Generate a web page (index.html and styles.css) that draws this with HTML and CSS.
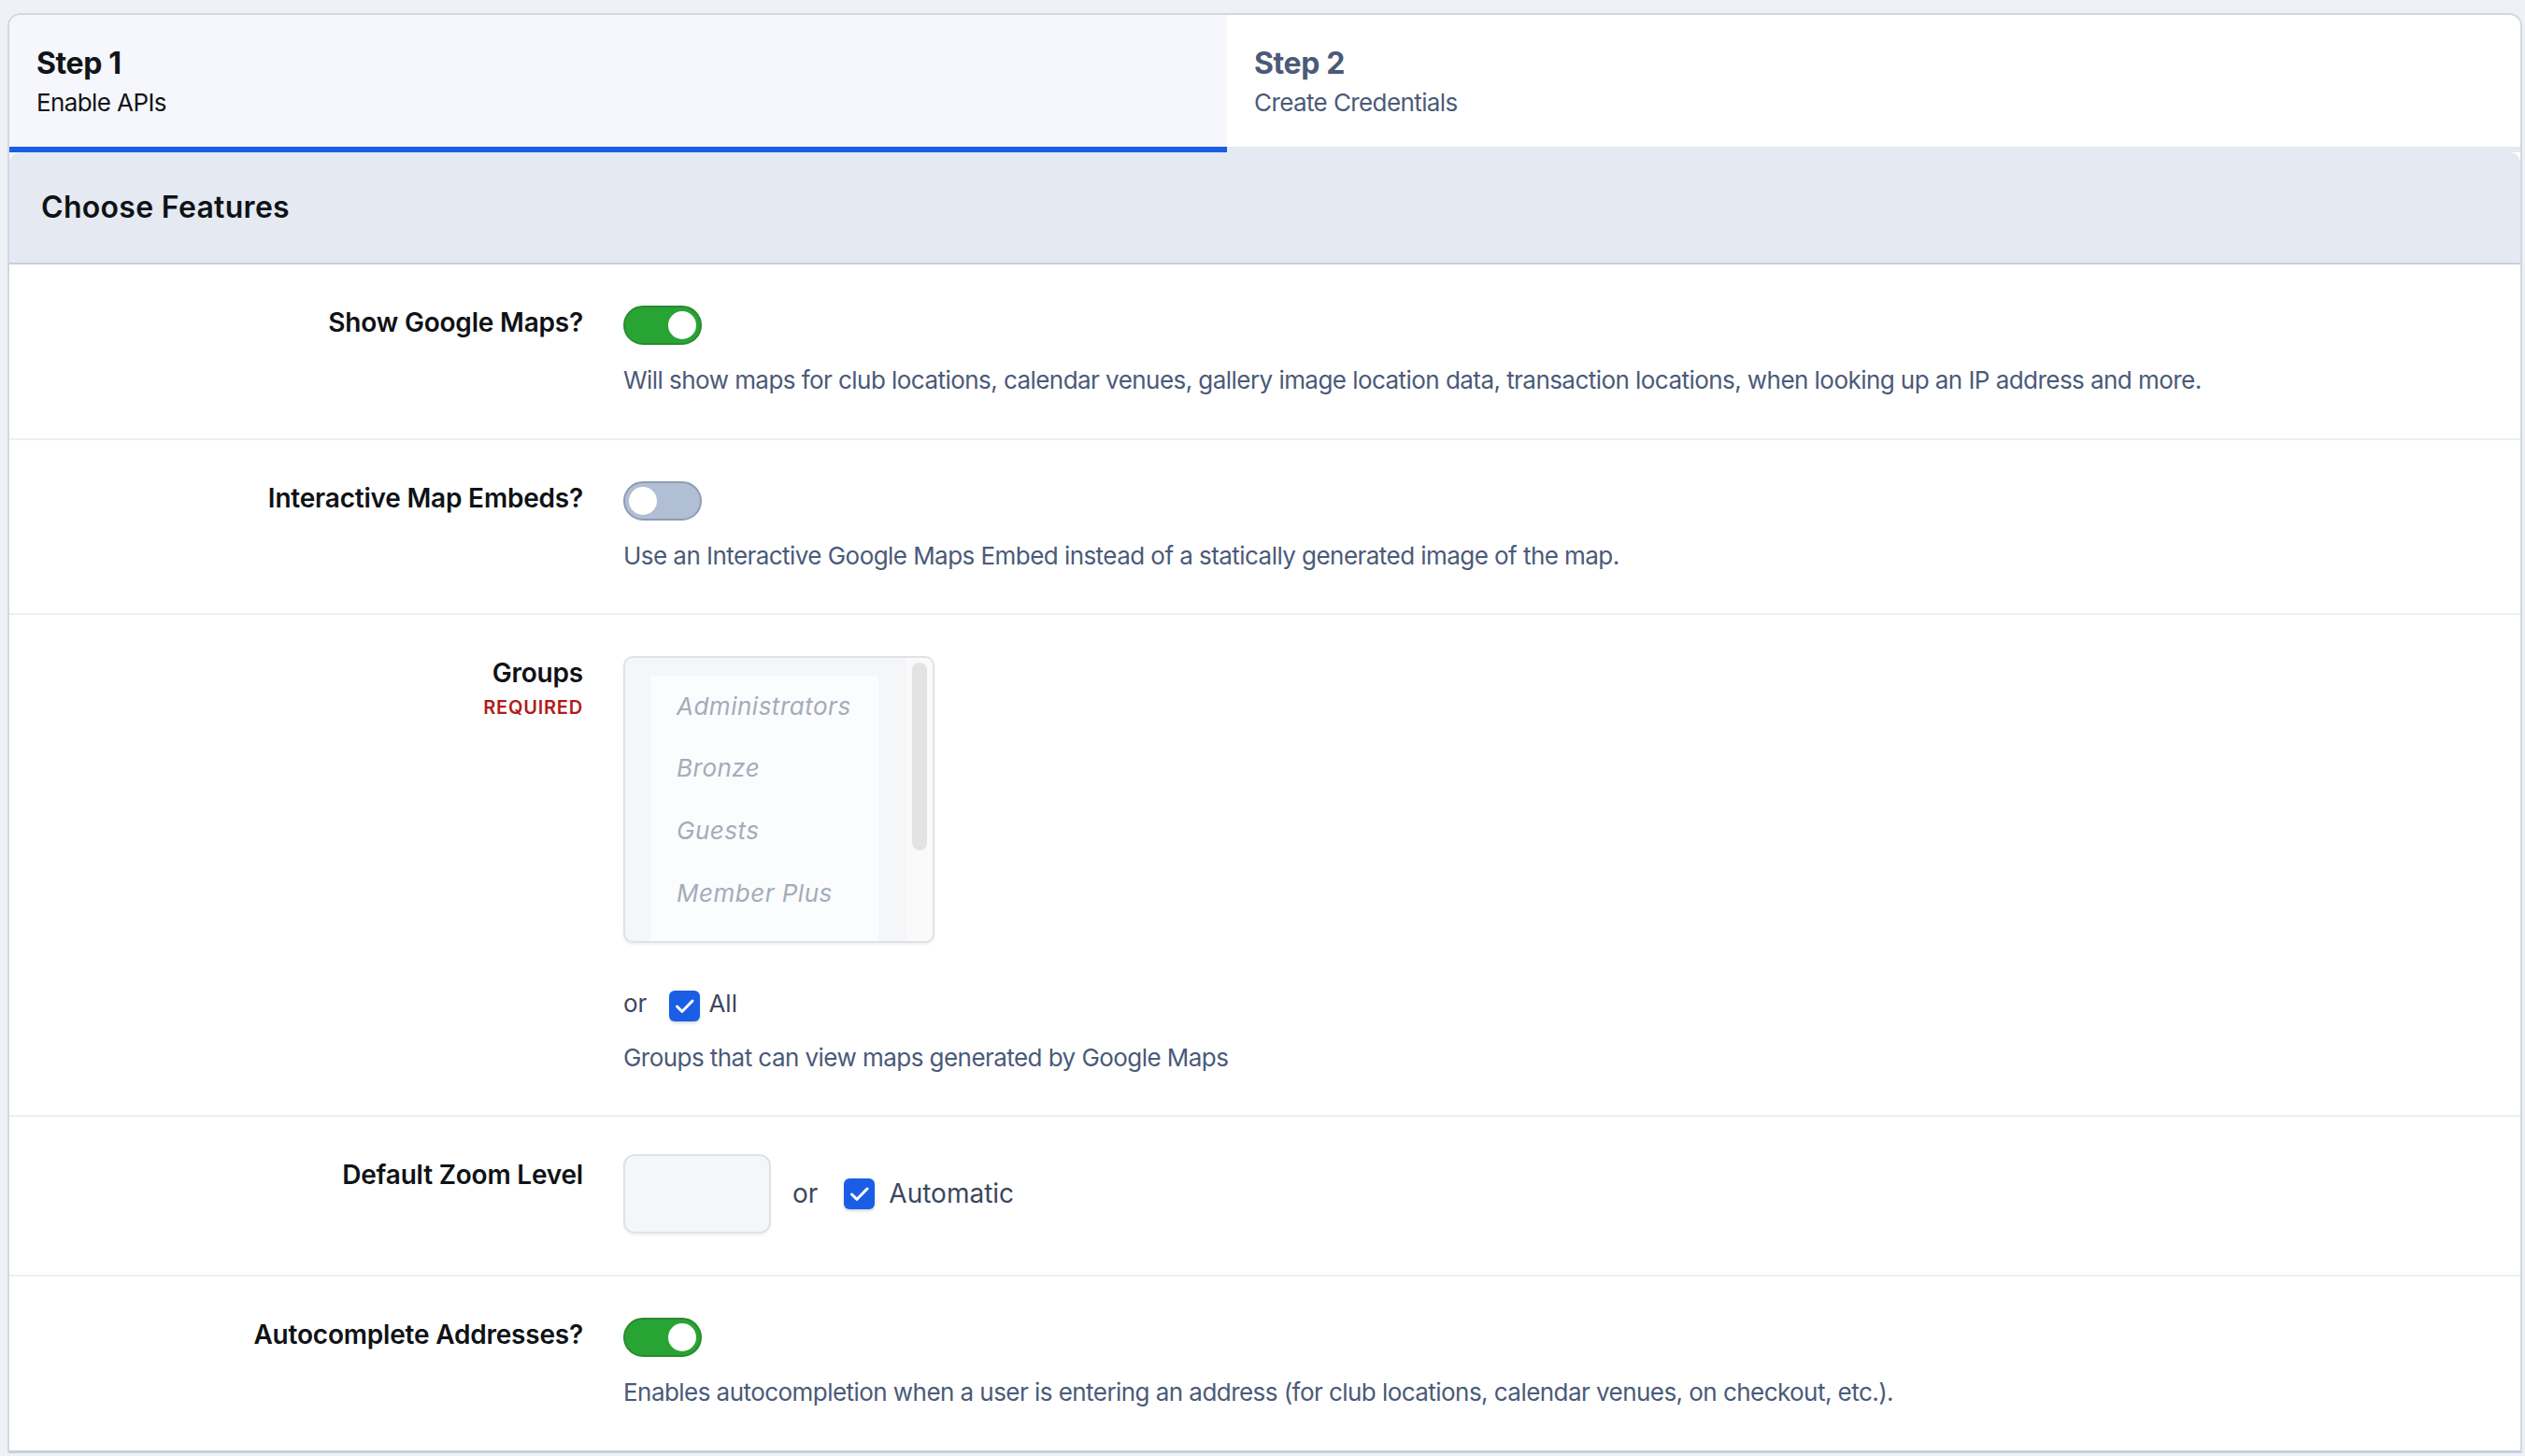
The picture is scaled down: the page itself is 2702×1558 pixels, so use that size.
FILE: index.html
```html
<!DOCTYPE html>
<html>
<head>
<meta charset="utf-8">
<link rel="stylesheet" href="styles.css">
</head>
<body>
<div class="page">
  <div class="card">
    <div class="tabs">
      <div class="tab tab-active">
        <div class="tab-title">Step 1</div>
        <div class="tab-sub">Enable APIs</div>
      </div>
      <div class="tab tab-idle">
        <div class="tab-title">Step 2</div>
        <div class="tab-sub">Create Credentials</div>
      </div>
    </div>
    <div class="panel-wrap">
      <div class="panel-head">
        <h2 class="panel-title">Choose Features</h2>
      </div>

      <div class="row">
        <div class="label">Show Google Maps?</div>
        <div class="field">
          <div class="toggle toggle-on"><span class="knob"></span></div>
          <div class="help">Will show maps for club locations, calendar venues, gallery image location data, transaction locations, when looking up an IP address and more.</div>
        </div>
      </div>

      <div class="row">
        <div class="label">Interactive Map Embeds?</div>
        <div class="field">
          <div class="toggle toggle-off"><span class="knob"></span></div>
          <div class="help">Use an Interactive Google Maps Embed instead of a statically generated image of the map.</div>
        </div>
      </div>

      <div class="row">
        <div class="label">
          <div>Groups</div>
          <div class="required">REQUIRED</div>
        </div>
        <div class="field">
          <div class="listbox">
            <div class="list-main">
              <div class="options">
                <div class="option">Administrators</div>
                <div class="option">Bronze</div>
                <div class="option">Guests</div>
                <div class="option">Member Plus</div>
              </div>
            </div>
            <div class="track"><div class="thumb"></div></div>
          </div>
          <div class="or-line">
            <span class="or">or</span>
            <span class="checkbox"><svg viewBox="0 0 33 33" width="33" height="33"><polyline points="8.5,17 14,22.3 25,11" fill="none" stroke="#fff" stroke-width="3" stroke-linecap="round" stroke-linejoin="round"/></svg></span>
            <span class="cb-label">All</span>
          </div>
          <div class="help help-groups">Groups that can view maps generated by Google Maps</div>
        </div>
      </div>

      <div class="row row-zoom">
        <div class="label">Default Zoom Level</div>
        <div class="field zoom-field">
          <div class="text-input"></div>
          <span class="or or-lg">or</span>
          <span class="checkbox"><svg viewBox="0 0 33 33" width="33" height="33"><polyline points="8.5,17 14,22.3 25,11" fill="none" stroke="#fff" stroke-width="3" stroke-linecap="round" stroke-linejoin="round"/></svg></span>
          <span class="cb-label cb-label-lg">Automatic</span>
        </div>
      </div>

      <div class="row row-last">
        <div class="label">Autocomplete Addresses?</div>
        <div class="field">
          <div class="toggle toggle-on"><span class="knob"></span></div>
          <div class="help">Enables autocompletion when a user is entering an address (for club locations, calendar venues, on checkout, etc.).</div>
        </div>
      </div>
    </div>
  </div>
</div>
</body>
</html>
```
FILE: styles.css
```css
* { box-sizing: border-box; }
html, body {
  margin: 0;
  padding: 0;
  background: #eef1f6;
  font-family: "Inter", "Liberation Sans", sans-serif;
  color: #111418;
}
.page {
  padding: 14px 3px 0 8px;
  height: 1558px;
  overflow: hidden;
}
.card {
  border: 2px solid #d0d8e4;
  border-bottom: none;
  border-radius: 14px 14px 0 0;
  overflow: hidden;
  background: #fff;
}
.tabs {
  display: flex;
}
.tab {
  padding: 32px 28px 29px 29px;
}
.tab-active {
  flex: 0 0 1303px;
  background: #f5f7fc;
  border-bottom: 6px solid #1b5ee6;
  color: #111418;
}
.tab-idle {
  flex: 1 1 auto;
  background: #fff;
  border-bottom: 6px solid #e5e9f1;
  color: #4b5a78;
}
.tab-title {
  font-size: 32px;
  line-height: 40px;
  font-weight: 700;
  letter-spacing: -0.4px;
}
.tab-sub {
  font-size: 26px;
  line-height: 40px;
  font-weight: 400;
  letter-spacing: -0.6px;
  margin-top: 2px;
  margin-bottom: -2px;
}
.panel-wrap {
  background: linear-gradient(90deg, #f5f7fc 0, #f5f7fc 1303px, #fff 1303px);
}
.panel-head {
  height: 120px;
  background: #e5e9f1;
  border-bottom: 2px solid #c5cfdf;
  border-radius: 12px 12px 0 0;
  display: flex;
  align-items: center;
  padding-left: 34px;
}
.panel-title {
  margin: 0;
  font-size: 32px;
  line-height: 40px;
  font-weight: 600;
  letter-spacing: 0.3px;
  color: #0f1216;
}
.row {
  display: grid;
  grid-template-columns: 614px 1fr;
  column-gap: 43px;
  padding: 44px 0 43px;
  border-bottom: 2px solid #eeeff1;
  background: #fff;
}
.row-last {
  border-bottom: 3px solid #c5cfdf;
}
.label {
  text-align: right;
  font-size: 28px;
  line-height: 36px;
  font-weight: 600;
  letter-spacing: -0.2px;
  color: #0f1216;
}
.required {
  font-size: 20px;
  line-height: 26px;
  font-weight: 600;
  letter-spacing: 0.8px;
  color: #b11b1b;
  margin-top: 6px;
}
.field {
  min-width: 0;
}
.toggle {
  width: 84px;
  height: 42px;
  border-radius: 21px;
  border: 2px solid;
  display: flex;
  align-items: center;
  padding: 0 4px;
}
.toggle-on {
  background: #28a434;
  border-color: #2a8a30;
  justify-content: flex-end;
}
.toggle-off {
  background: #b1bfd4;
  border-color: #8e9cb4;
  justify-content: flex-start;
}
.knob {
  width: 30px;
  height: 30px;
  border-radius: 50%;
  background: #fff;
}
.help {
  margin-top: 18px;
  margin-bottom: -1.5px;
  font-size: 26px;
  line-height: 40px;
  letter-spacing: -0.55px;
  color: #4a5a78;
}
.help-groups {
  margin-top: 19px;
  margin-bottom: -2px;
}
.listbox {
  width: 333px;
  height: 307px;
  border: 2px solid #dfe2e8;
  border-radius: 10px;
  background: #f5f6f8;
  box-shadow: 0 2px 3px rgba(0, 0, 0, 0.06);
  display: flex;
  overflow: hidden;
}
.list-main {
  flex: 1 1 auto;
  padding: 18.6px 30px 0 27px;
  overflow: hidden;
}
.options {
  background: #fbfcfd;
  height: 100%;
  padding-left: 28px;
}
.option {
  font-size: 26px;
  line-height: 66.67px;
  font-style: italic;
  letter-spacing: 0.5px;
  color: #a4acba;
  white-space: nowrap;
}
.track {
  flex: 0 0 28px;
  background: #fafafa;
  padding: 5px 6px 0;
}
.thumb {
  height: 201px;
  border-radius: 8px;
  background: #e3e3e3;
}
.or-line {
  margin-top: 51px;
  display: flex;
  align-items: center;
  height: 33px;
}
.or {
  font-size: 26px;
  line-height: 33px;
  padding-bottom: 6px;
  color: #3b4760;
  margin-right: 24px;
}
.checkbox {
  width: 33px;
  height: 33px;
  border-radius: 6px;
  background: #1b5ee6;
  box-shadow: 0 2px 3px rgba(0, 0, 0, 0.15);
  display: inline-block;
  flex: 0 0 33px;
}
.checkbox svg { display: block; }
.cb-label {
  font-size: 26px;
  line-height: 33px;
  padding-bottom: 6px;
  color: #3b4760;
  margin-left: 9px;
}
.zoom-field {
  display: flex;
  align-items: center;
  margin-top: -4px;
  height: 85px;
}
.text-input {
  width: 158px;
  height: 85px;
  border: 2px solid #dfe2e8;
  border-radius: 12px;
  background: #f5f6f8;
  box-shadow: 0 2px 3px rgba(0, 0, 0, 0.05);
  margin-right: 23px;
}
.or-lg {
  font-size: 28px;
  padding-bottom: 0;
  margin-right: 28px;
}
.cb-label-lg {
  font-size: 28px;
  padding-bottom: 0;
  margin-left: 15px;
}
.row-zoom {
  padding-bottom: 44px;
}
```
